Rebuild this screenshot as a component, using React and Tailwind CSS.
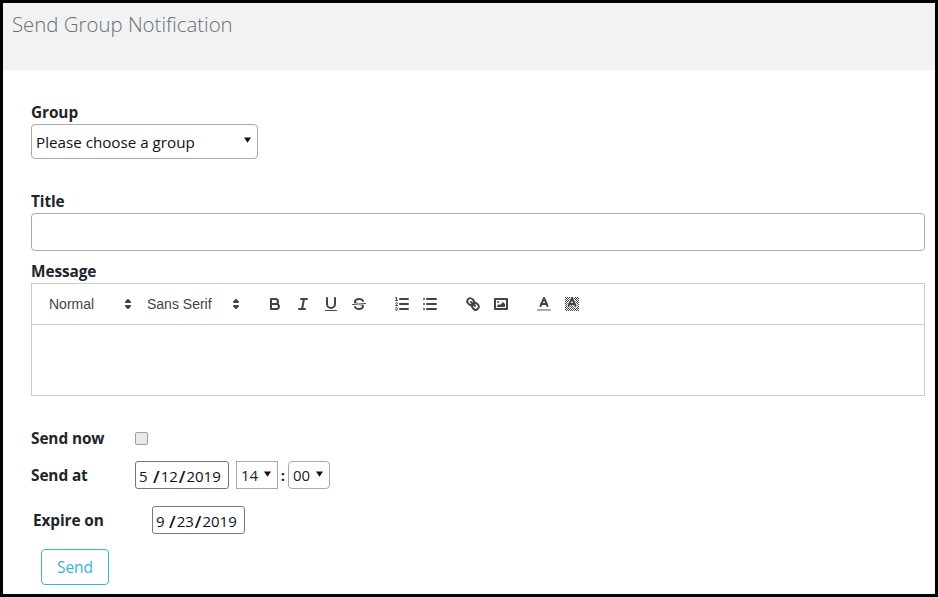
const FONT = "font-['Open_Sans','Noto_Sans',sans-serif]";

function Icon({ children }) {
  return (
    <button className="w-[28px] h-[24px] px-[5px] py-[3px] flex items-center justify-center">
      <svg viewBox="0 0 18 18" className="w-[18px] h-[18px]" fill="none" stroke="#444" strokeWidth="2" strokeLinecap="round" strokeLinejoin="round">
        {children}
      </svg>
    </button>
  );
}

const Chevrons = ({ className }) => (
  <svg viewBox="0 0 18 18" className={"w-[18px] h-[18px] " + className} fill="#444" stroke="#444" strokeWidth="2" strokeLinejoin="round">
    <polygon points="7 11 9 13 11 11 7 11" />
    <polygon points="7 7 9 5 11 7 7 7" />
  </svg>
);

const Caret = () => (
  <svg viewBox="0 0 8 6" className="w-[7px] h-[6px]" fill="#111"><polygon points="0,0 8,0 4,6" /></svg>
);

function Picker({ label, width }) {
  return (
    <div className={"relative flex items-center h-[24px] pl-[8px] text-[14px] text-[#444] font-['Liberation_Sans',sans-serif] " + width}>
      {label}
      <span className="absolute right-[2px] top-[3px]"><Chevrons /></span>
    </div>
  );
}

function DateBox({ value, className, monthWidth }) {
  const [m, d, y] = value;
  const slash = "mx-[1px] text-[17px] leading-none font-semibold";
  return (
    <div className={"flex items-center h-[28px] border border-[#767676] rounded-[3px] pl-[3px] pt-[2px] text-[15px] text-[#111] " + className}>
      <span className={monthWidth}>{m}</span><span className={slash}>/</span><span>{d}</span><span className={slash}>/</span><span>{y}</span>
    </div>
  );
}

function TimeBox({ value, className }) {
  return (
    <div className={"flex items-center h-[28px] border border-[#aaa] pl-[4px] gap-[6px] text-[15px] text-[#222] " + className}>
      <span className="pt-[1px]">{value}</span>
      <span className="-mt-[3px]"><Caret /></span>
    </div>
  );
}

const LABEL = "translate-y-[1px] text-[15.4px] font-bold tracking-[-0.1px] text-[#212529]";

export default function App() {
  return (
    <div className={"w-[938px] h-[597px] border-[3px] border-black bg-white overflow-hidden " + FONT}>
      <header className="h-[67px] bg-[#f2f2f2] pl-[9px] pt-[6px]">
        <h1 className="text-[20.4px] leading-[30px] font-light text-[#667078]">Send Group Notification</h1>
      </header>

      <main className="pl-[28px] pr-[10px]">
        <label className={"block mt-[31px] leading-[22px] " + LABEL}>Group</label>
        <div className="flex items-center justify-between w-[227px] h-[35px] mt-[1px] pl-[4px] pr-[6px] border border-[#aaa] rounded-[4px] text-[15.2px] text-[#111]">
          <span className="pt-[1px]">Please choose a group</span>
          <span className="-mt-[3px]"><Caret /></span>
        </div>

        <label className={"block mt-[31px] leading-[22px] " + LABEL}>Title</label>
        <div className="h-[38px] mt-[1px] border border-[#aaa] rounded-[4px]" />

        <label className={"block mt-[9px] leading-[22px] " + LABEL}>Message</label>
        <div className="mt-[1px] border border-[#ccc]">
          <div className="flex items-center h-[41px] pl-[9px] border-b border-[#ccc]">
            <Picker label="Normal" width="w-[98px]" />
            <div className="mr-[14px]"><Picker label="Sans Serif" width="w-[108px]" /></div>
            <div className="flex mr-[15px]">
              <Icon>
                <path d="M5,4H9.5A2.5,2.5,0,0,1,12,6.5v0A2.5,2.5,0,0,1,9.5,9H5A0,0,0,0,1,5,9V4A0,0,0,0,1,5,4Z" />
                <path d="M5,9h5.5A2.5,2.5,0,0,1,13,11.5v0A2.5,2.5,0,0,1,10.5,14H5a0,0,0,0,1,0,0V9A0,0,0,0,1,5,9Z" />
              </Icon>
              <Icon>
                <line x1="7" x2="13" y1="4" y2="4" />
                <line x1="5" x2="11" y1="14" y2="14" />
                <line x1="8" x2="10" y1="14" y2="4" />
              </Icon>
              <Icon>
                <path d="M5,3V9a4.012,4.012,0,0,0,4,4H9a4.012,4.012,0,0,0,4-4V3" />
                <rect x="3" y="15" width="12" height="1" rx=".5" ry=".5" fill="#444" stroke="none" />
              </Icon>
              <Icon>
                <line x1="15.5" x2="2.5" y1="8.5" y2="9.5" strokeWidth="1" />
                <path stroke="none" fill="#444" d="M9.007,8C6.542,7.791,6,7.519,6,6.5,6,5.792,7.283,5,9,5c1.571,0,2.765.679,2.969,1.309a1,1,0,0,0,1.9-.617C13.356,4.106,11.354,3,9,3,6.2,3,4,4.538,4,6.5a3.2,3.2,0,0,0,.5,1.843Z" />
                <path stroke="none" fill="#444" d="M8.984,10C11.457,10.208,12,10.479,12,11.5c0,.708-1.283,1.5-3,1.5-1.571,0-2.765-.679-2.969-1.309a1,1,0,0,0-1.9.617C4.644,13.894,6.646,15,9,15c2.8,0,5-1.538,5-3.5a3.2,3.2,0,0,0-.5-1.843Z" />
              </Icon>
            </div>
            <div className="flex mr-[15px]">
              <Icon>
                <line x1="7" x2="15" y1="4" y2="4" />
                <line x1="7" x2="15" y1="9" y2="9" />
                <line x1="7" x2="15" y1="14" y2="14" />
                <line x1="2.5" x2="4.5" y1="5.5" y2="5.5" strokeWidth="1" />
                <path stroke="none" fill="#444" d="M3.5,6A0.5,0.5,0,0,1,3,5.5V3.085l-0.276.138A0.5,0.5,0,0,1,2.053,3c-0.124-.247-0.023-0.324.224-0.447l1-.5A0.5,0.5,0,0,1,4,2.5v3A0.5,0.5,0,0,1,3.5,6Z" />
                <path strokeWidth="1" d="M4.5,10.5h-2c0-.234,1.85-1.076,1.85-2.234A0.959,0.959,0,0,0,2.5,8.156" />
                <path strokeWidth="1" d="M2.5,14.846a0.959,0.959,0,0,0,1.85-.109A0.7,0.7,0,0,0,3.75,14a0.688,0.688,0,0,0,.6-0.736,0.959,0.959,0,0,0-1.85-.109" />
              </Icon>
              <Icon>
                <line x1="6" x2="15" y1="4" y2="4" />
                <line x1="6" x2="15" y1="9" y2="9" />
                <line x1="6" x2="15" y1="14" y2="14" />
                <line x1="3" x2="3" y1="4" y2="4" />
                <line x1="3" x2="3" y1="9" y2="9" />
                <line x1="3" x2="3" y1="14" y2="14" />
              </Icon>
            </div>
            <div className="flex mr-[15px]">
              <Icon>
                <line x1="7" x2="11" y1="7" y2="11" />
                <path d="M8.9,4.577a3.476,3.476,0,0,1,.36,4.679A3.476,3.476,0,0,1,4.577,8.9C3.185,7.5,2.035,6.4,4.217,4.217S7.5,3.185,8.9,4.577Z" />
                <path d="M13.423,9.1a3.476,3.476,0,0,0-4.679-.36,3.476,3.476,0,0,0,.36,4.679c1.392,1.392,2.5,2.542,4.679.36S14.815,10.5,13.423,9.1Z" />
              </Icon>
              <Icon>
                <rect x="3" y="4" width="12" height="10" />
                <circle cx="6" cy="7" r="1" fill="#444" stroke="none" />
                <polyline stroke="none" fill="#444" points="5 12 5 11 7 9 8 10 11 7 13 9 13 12 5 12" />
              </Icon>
            </div>
            <div className="flex">
              <Icon>
                <line x1="3" x2="15" y1="15" y2="15" stroke="#aaa" />
                <polyline points="5.5 11 9 3 12.5 11" />
                <line x1="11.63" x2="6.38" y1="9" y2="9" />
              </Icon>
              <Icon>
                <defs>
                  <pattern id="hatch" width="2" height="2" patternUnits="userSpaceOnUse">
                    <rect width="1" height="1" fill="#444" stroke="none" />
                    <rect x="1" y="1" width="1" height="1" fill="#444" stroke="none" />
                  </pattern>
                </defs>
                <rect x="2" y="2" width="14" height="14" fill="url(#hatch)" stroke="none" />
                <polyline points="5.5 11 9 3 12.5 11" stroke="#fff" strokeWidth="3.5" />
                <polyline points="5.5 11 9 3 12.5 11" />
                <line x1="11.63" x2="6.38" y1="9" y2="9" />
              </Icon>
            </div>
          </div>
          <div className="h-[70px]" />
        </div>

        <div className="flex items-center h-[22px] mt-[31px]">
          <span className={"w-[104px] " + LABEL}>Send now</span>
          <span className="w-[13px] h-[13px] border border-[#a0a0a0] rounded-[2px] bg-[#e9e9e9]" />
        </div>

        <div className="flex items-center mt-[12px]">
          <span className={"w-[104px] " + LABEL}>Send at</span>
          <DateBox value={["5", "12", "2019"]} className="w-[94px]" monthWidth="w-[13px]" />
          <TimeBox value="14" className="w-[42px] ml-[7px]" />
          <span className="w-[10px] text-center text-[15px] font-bold text-[#212529]">:</span>
          <TimeBox value="00" className="w-[42px] rounded-[4px]" />
        </div>

        <div className="flex items-center mt-[17px] ml-[2px]">
          <span className={"w-[119px] " + LABEL}>Expire on</span>
          <DateBox value={["9", "23", "2019"]} className="w-[93px]" monthWidth="w-[12px]" />
        </div>

        <button className="block w-[68px] h-[36px] mt-[15px] ml-[10px] pt-[1px] border border-[#35b4e0] rounded-[4px] text-[15.5px] font-normal text-[#35b4e0]">
          Send
        </button>
      </main>
    </div>
  );
}
